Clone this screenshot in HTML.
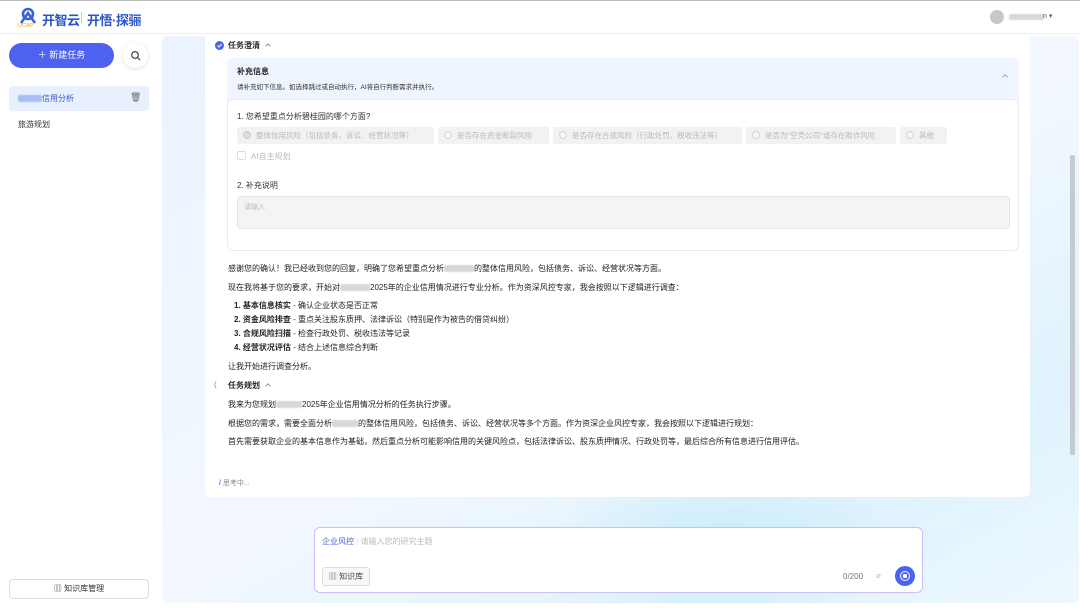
<!DOCTYPE html>
<html><head><meta charset="utf-8"><style>
*{box-sizing:border-box;margin:0;padding:0}
body{width:1080px;height:608px;overflow:hidden;background:#fff;font-family:"Liberation Sans","Noto Sans CJK SC",sans-serif;color:#222;position:relative}
.a{position:absolute}
.t{font-size:8px;white-space:nowrap}
.blur{display:inline-block;background:#d8d8dc;height:7px;vertical-align:middle;border-radius:2px;filter:blur(0.6px)}
.opt{position:absolute;top:127px;height:17px;background:#f2f2f3;border-radius:2px;font-size:7.5px;color:#b8b8bc;line-height:17px;padding-left:6px;white-space:nowrap}
.opt i{display:inline-block;width:8px;height:8px;border:1px solid #d5d5d8;border-radius:50%;background:#f6f6f6;vertical-align:-1px;margin-right:5px}
.chev{display:inline-block;width:4px;height:4px;border-left:1px solid #999;border-top:1px solid #999;transform:rotate(45deg);margin-left:6px;vertical-align:0px}
</style></head><body>
<div class="a" style="left:0;top:0;width:1080px;height:1px;background:#bbb"></div>
<div class="a" style="left:0;top:33px;width:1080px;height:1px;background:#eee"></div>
<svg class="a" style="left:18px;top:7px" width="22" height="20" viewBox="0 0 22 20"><circle cx="10" cy="7" r="5" fill="none" stroke="#3a63d6" stroke-width="2.6"/><path d="M3 16 L10 6 L17 16" fill="none" stroke="#3a63d6" stroke-width="2.6"/><text x="0" y="20" font-size="5.5" fill="#f0a020" font-family="Liberation Sans">UCAP</text></svg>
<div class="a" style="left:42px;top:10px;font-size:13px;font-weight:bold;color:#2a55c8;letter-spacing:-0.5px">开智云</div>
<div class="a" style="left:81px;top:12px;width:1px;height:11px;background:#ccc"></div>
<div class="a" style="left:87px;top:10px;font-size:13px;font-weight:bold;color:#2a55c8;letter-spacing:-0.5px">开悟·探骊</div>
<div class="a" style="left:990px;top:10px;width:14px;height:14px;border-radius:50%;background:#c8c8cc"></div>
<div class="a blur" style="left:1009px;top:14px;width:35px;height:6px"></div>
<div class="a t" style="left:1043px;top:12px;font-size:7px;color:#555">n ▾</div>
<div class="a" style="left:9px;top:43px;width:105px;height:25px;border-radius:13px;background:#4d62f0;color:#fff;font-size:9px;text-align:center;line-height:25px">＋ 新建任务</div>
<div class="a" style="left:123px;top:43px;width:25px;height:25px;border-radius:50%;background:#fff;box-shadow:0 1px 4px rgba(0,0,0,.12)"></div>
<svg class="a" style="left:130px;top:50px" width="11" height="11"><circle cx="5" cy="5" r="3.3" fill="none" stroke="#333" stroke-width="1.1"/><path d="M7.5 7.5 L10 10" stroke="#333" stroke-width="1.1"/></svg>
<div class="a" style="left:9px;top:86px;width:140px;height:25px;border-radius:4px;background:#e8effd"></div>
<div class="a blur" style="left:18px;top:95px;width:24px;background:#a8bdf0"></div>
<div class="a t" style="left:42px;top:93px;color:#3a5ad8">信用分析</div>
<div class="a t" style="left:130px;top:92px;color:#666;font-size:9px">🗑</div>
<div class="a t" style="left:18px;top:119px;color:#333">旅游规划</div>
<div class="a" style="left:9px;top:579px;width:140px;height:20px;border:1px solid #ddd;border-radius:4px;font-size:8px;text-align:center;line-height:18px;color:#333">▥ 知识库管理</div>
<div class="a" style="left:162px;top:36px;width:917px;height:567px;border-radius:6px;background:linear-gradient(150deg,#eaf3fe 0%,#f3f8fe 50%,#dff2fd 80%,#eef8fe 100%);overflow:hidden">
<div class="a" style="left:380px;top:430px;width:360px;height:160px;background:radial-gradient(ellipse at center,#c7ecfb 0%,rgba(210,240,253,0) 70%)"></div>
</div>
<div class="a" style="left:1070px;top:155px;width:5px;height:300px;background:#c5c9d0;border-radius:2px"></div>
<div class="a" style="left:205px;top:34px;width:825px;height:463px;background:#fff;border-radius:0 0 6px 6px"></div>
<svg class="a" style="left:215px;top:41px" width="9" height="9"><circle cx="4.5" cy="4.5" r="4.5" fill="#4a63e8"/><path d="M2.5 4.6 L4 6 L6.6 3.2" fill="none" stroke="#fff" stroke-width="1"/></svg>
<div class="a t" style="left:228px;top:40px;font-weight:bold">任务澄清<span class="chev"></span></div>
<div class="a" style="left:227px;top:58px;width:792px;height:193px;background:#eef5fe;border-radius:6px"></div>
<div class="a t" style="left:237px;top:66px;font-weight:bold">补充信息</div>
<div class="a t" style="left:237px;top:81px;font-size:6.5px;color:#333">请补充如下信息。如选择跳过或自动执行，AI将自行判断需求并执行。</div>
<div class="a" style="left:1003px;top:75px;width:4px;height:4px;border-left:1px solid #aaa;border-top:1px solid #aaa;transform:rotate(45deg)"></div>
<div class="a" style="left:227px;top:99px;width:792px;height:152px;background:#fff;border:1px solid #e8ebf0;border-radius:6px"></div>
<div class="a t" style="left:237px;top:111px;color:#333">1. 您希望重点分析碧桂园的哪个方面?</div>
<div class="opt" style="left:237px;width:197px"><i style="background:#ddd;border-color:#ccc"></i>整体信用风险（包括债务、诉讼、经营状况等）</div>
<div class="opt" style="left:438px;width:111px"><i></i>是否存在资金断裂风险</div>
<div class="opt" style="left:553px;width:189px"><i></i>是否存在合规风险（行政处罚、税收违法等）</div>
<div class="opt" style="left:746px;width:150px"><i></i>是否为"空壳公司"或存在欺诈风险</div>
<div class="opt" style="left:900px;width:47px"><i></i>其他</div>
<div class="a" style="left:237px;top:151px;width:9px;height:9px;border:1px solid #ddd;border-radius:2px"></div>
<div class="a t" style="left:251px;top:151px;color:#bbb">AI自主规划</div>
<div class="a t" style="left:237px;top:180px;color:#333">2. 补充说明</div>
<div class="a" style="left:237px;top:196px;width:773px;height:33px;background:#f4f4f5;border:1px solid #e4e4e6;border-radius:4px"></div>
<div class="a t" style="left:244px;top:202px;font-size:7px;color:#bbb">请输入</div>
<div class="a t" style="left:228px;top:263px">感谢您的确认！我已经收到您的回复，明确了您希望重点分析<span class="blur" style="width:30px"></span>的整体信用风险，包括债务、诉讼、经营状况等方面。</div>
<div class="a t" style="left:228px;top:282px">现在我将基于您的要求，开始对<span class="blur" style="width:30px"></span>2025年的企业信用情况进行专业分析。作为资深风控专家，我会按照以下逻辑进行调查：</div>
<div class="a t" style="left:234px;top:300px"><b>1. 基本信息核实</b> - 确认企业状态是否正常</div>
<div class="a t" style="left:234px;top:314px"><b>2. 资金风险排查</b> - 重点关注股东质押、法律诉讼（特别是作为被告的借贷纠纷）</div>
<div class="a t" style="left:234px;top:328px"><b>3. 合规风险扫描</b> - 检查行政处罚、税收违法等记录</div>
<div class="a t" style="left:234px;top:342px"><b>4. 经营状况评估</b> - 结合上述信息综合判断</div>
<div class="a t" style="left:228px;top:361px">让我开始进行调查分析。</div>
<div class="a t" style="left:214px;top:380px;color:#6a7cf0">(</div>
<div class="a t" style="left:228px;top:380px;font-weight:bold">任务规划<span class="chev"></span></div>
<div class="a t" style="left:228px;top:399px">我来为您规划<span class="blur" style="width:26px"></span>2025年企业信用情况分析的任务执行步骤。</div>
<div class="a t" style="left:228px;top:418px">根据您的需求，需要全面分析<span class="blur" style="width:26px"></span>的整体信用风险，包括债务、诉讼、经营状况等多个方面。作为资深企业风控专家，我会按照以下逻辑进行规划：</div>
<div class="a t" style="left:228px;top:436px">首先需要获取企业的基本信息作为基础，然后重点分析可能影响信用的关键风险点，包括法律诉讼、股东质押情况、行政处罚等，最后综合所有信息进行信用评估。</div>
<div class="a t" style="left:219px;top:478px;font-size:7px;color:#888"><span style="color:#7a6cf0;font-weight:bold">/</span> 思考中...</div>
<div class="a" style="left:314px;top:527px;width:609px;height:66px;background:#fff;border:1px solid #c9c0f8;border-radius:6px"></div>
<div class="a t" style="left:322px;top:536px;color:#4a5ee8">企业风控 <span style="color:#ddd">|</span> <span style="color:#bbb">请输入您的研究主题</span></div>
<div class="a" style="left:322px;top:567px;width:48px;height:19px;border:1px solid #ddd;border-radius:3px;background:#f8f8f8;font-size:8px;text-align:center;line-height:17px;color:#444">▥ 知识库</div>
<div class="a t" style="left:843px;top:572px;color:#777">0/200</div>
<div class="a t" style="left:876px;top:571px;color:#bbb">⌀</div>
<div class="a" style="left:895px;top:566px;width:20px;height:20px;border-radius:50%;background:#4a63f0"></div>
<div class="a" style="left:900px;top:571px;width:10px;height:10px;border-radius:50%;border:1.5px solid #fff"></div>
<div class="a" style="left:903px;top:574px;width:4px;height:4px;background:#fff;border-radius:1px"></div>
</body></html>
